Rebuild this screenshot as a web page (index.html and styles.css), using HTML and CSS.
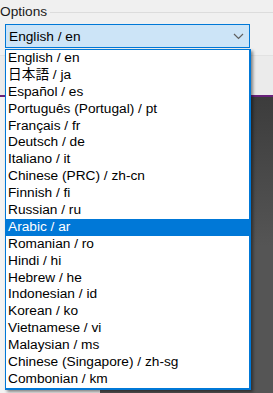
FILE: index.html
```html
<!DOCTYPE html>
<html>
<head>
<meta charset="utf-8">
<link rel="stylesheet" href="styles.css">
</head>
<body>
<div class="top">
  <div class="legend"><span class="legend-text">Options</span><span class="legend-line"></span></div>
  <div class="select">
    <span class="select-text">English / en</span>
    <svg class="chev" width="11" height="7" viewBox="0 0 11 7"><path d="M1 1 L5.5 5.5 L10 1" fill="none" stroke="#606060" stroke-width="1.2"/></svg>
  </div>
  <div class="toolbar"></div>
</div>
<div class="bottom">
  <div class="side"></div>
  <div class="dark"></div>
</div>
<ul class="list">
  <li>English / en</li>
  <li>日本語 / ja</li>
  <li>Español / es</li>
  <li>Português (Portugal) / pt</li>
  <li>Français / fr</li>
  <li>Deutsch / de</li>
  <li>Italiano / it</li>
  <li>Chinese (PRC) / zh-cn</li>
  <li>Finnish / fi</li>
  <li>Russian / ru</li>
  <li class="sel">Arabic / ar</li>
  <li>Romanian / ro</li>
  <li>Hindi / hi</li>
  <li>Hebrew / he</li>
  <li>Indonesian / id</li>
  <li>Korean / ko</li>
  <li>Vietnamese / vi</li>
  <li>Malaysian / ms</li>
  <li>Chinese (Singapore) / zh-sg</li>
  <li>Combonian / km</li>
</ul>
</body>
</html>
```
FILE: styles.css
```css
html, body {
  margin: 0;
  padding: 0;
}
body {
  width: 273px;
  height: 393px;
  overflow: hidden;
  position: relative;
  background: #f0f0f0;
  font-family: "Liberation Sans", Arial, "Noto Sans CJK JP", sans-serif;
  color: #000;
}
.top {
  height: 95px;
  display: flex;
  flex-direction: column;
}
.legend {
  display: flex;
  align-items: center;
  height: 24px;
}
.legend-text {
  font-size: 13.7px;
  color: #1a1a1a;
  line-height: 16px;
}
.legend-line {
  flex: 1;
  height: 1px;
  background: #dcdcdc;
  margin-left: 3px;
}
.select {
  margin-left: 5px;
  width: 243px;
  height: 22px;
  border: 1px solid #0078d7;
  background: #cce4f7;
  display: flex;
  align-items: center;
  justify-content: space-between;
}
.select-text {
  font-size: 13.7px;
  padding-left: 3px;
}
.chev {
  margin-right: 5px;
}
.toolbar {
  margin-top: 7px;
  flex: 1;
  border-top: 1px solid #e2e2e2;
  background: #ebebeb;
}
.bottom {
  height: 298px;
  border-top: 2px solid #68217a;
  display: flex;
}
.side {
  width: 100px;
  background: #f3f3f3;
}
.dark {
  flex: 1;
  background: linear-gradient(#3c3c3c, #555555 50%, #555555);
}
.list {
  position: absolute;
  left: 5px;
  top: 49px;
  width: 243px;
  margin: 0;
  padding: 0;
  list-style: none;
  background: #fff;
  border: 1px solid #0078d7;
  border-right-width: 2px;
  border-bottom-width: 2px;
  box-shadow: 2px 2px 3px rgba(0,0,0,0.45);
}
.list li {
  height: 16.9px;
  line-height: 16.9px;
  font-size: 13.7px;
  padding-left: 2px;
  white-space: nowrap;
}
.list li.sel {
  background: #0078d7;
  color: #fff;
}
```
